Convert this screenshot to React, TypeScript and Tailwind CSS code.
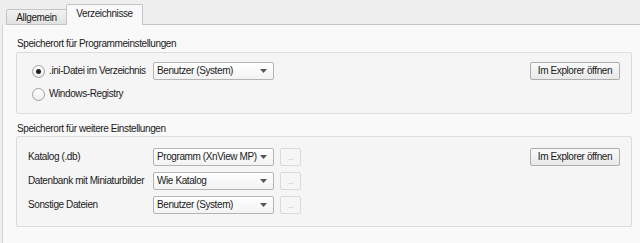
const font = { fontFamily: '"Liberation Sans", Arial, sans-serif' };

function Combo({ label }: { label: string }) {
  return (
    <div className="flex h-[18px] w-[121px] shrink-0 items-center justify-between rounded-[2px] border border-[#b4b4b4] bg-gradient-to-b from-[#ffffff] to-[#f3f3f3] pl-[3px] pr-[6px]">
      <span className="whitespace-nowrap text-[#1a1a1a]">{label}</span>
      <svg width="7" height="4" viewBox="0 0 7 4">
        <path d="M0 0h7L3.5 4z" fill="#555" />
      </svg>
    </div>
  );
}

function DotsButton() {
  return (
    <div className="ml-[6px] flex h-[18px] w-[21px] items-center justify-center rounded-[2px] border border-[#dadada] bg-[#f5f5f5] text-[9px] leading-none text-[#c8c8c8]">
      ...
    </div>
  );
}

function ExplorerButton() {
  return (
    <div className="flex h-[18px] w-[90px] items-center justify-center whitespace-nowrap rounded-[2px] border border-[#adadad] bg-gradient-to-b from-[#fafafa] to-[#e8e8e8] text-[#1a1a1a]">
      Im Explorer öffnen
    </div>
  );
}

function Radio({ checked }: { checked?: boolean }) {
  return (
    <div className="flex h-[13px] w-[13px] shrink-0 items-center justify-center rounded-full border border-[#a0a0a0] bg-gradient-to-b from-[#ffffff] to-[#ececec]">
      {checked && <div className="h-[5px] w-[5px] rounded-full bg-[#222]" />}
    </div>
  );
}

export default function App() {
  return (
    <div className="h-[243px] w-[640px] overflow-hidden bg-[#eeeeee] text-[10px] leading-[14px] tracking-[-0.4px] text-[#1a1a1a]" style={font}>
      {/* Tabs */}
      <div className="flex h-[25px] items-end pl-[6px]">
        <div className="flex h-[16px] w-[61px] items-center justify-center rounded-t-[2px] border border-[#c4c4c4] bg-gradient-to-b from-[#f2f2f2] to-[#e2e2e2] pt-px">
          Allgemein
        </div>
        <div className="-ml-px flex h-[21px] w-[77px] items-center justify-center rounded-t-[2px] border border-b-0 border-[#c4c4c4] bg-[#f9f9f9] pb-[2px]">
          Verzeichnisse
        </div>
        <div className="flex-1 border-b border-[#c4c4c4]" />
      </div>

      {/* Pane */}
      <div className="ml-[2px] h-[218px] border-l border-[#d4d4d4] bg-[#f9f9f9] pl-[13px] pr-[8px] pt-[12px]">
        <div className="mb-[1px] whitespace-nowrap pl-[1px]">Speicherort für Programmeinstellungen</div>
        <div className="flex h-[62px] items-start rounded-[2px] border border-[#dcdcdc] bg-[#f5f5f5] pl-[15px] pr-[11px] pt-[9px]">
          <div className="flex flex-col gap-[7px]">
            <div className="flex h-[18px] items-center">
              <Radio checked />
              <span className="ml-[4px] w-[104px] whitespace-nowrap">.ini-Datei im Verzeichnis</span>
              <Combo label="Benutzer (System)" />
            </div>
            <div className="flex h-[14px] items-center">
              <Radio />
              <span className="ml-[4px] whitespace-nowrap">Windows-Registry</span>
            </div>
          </div>
          <div className="ml-auto">
            <ExplorerButton />
          </div>
        </div>

        <div className="mt-[8px] whitespace-nowrap pl-[1px]">Speicherort für weitere Einstellungen</div>
        <div className="flex h-[91px] items-start rounded-[2px] border border-[#dcdcdc] bg-[#f5f5f5] pl-[11px] pr-[11px] pt-[11px]">
          <div className="flex flex-col gap-[6px]">
            {[
              ['Katalog (.db)', 'Programm (XnView MP)'],
              ['Datenbank mit Miniaturbilder', 'Wie Katalog'],
              ['Sonstige Dateien', 'Benutzer (System)'],
            ].map(([l, v]) => (
              <div key={l} className="flex h-[18px] items-center">
                <span className="w-[125px] shrink-0 whitespace-nowrap">{l}</span>
                <Combo label={v} />
                <DotsButton />
              </div>
            ))}
          </div>
          <div className="ml-auto">
            <ExplorerButton />
          </div>
        </div>
      </div>
    </div>
  );
}
